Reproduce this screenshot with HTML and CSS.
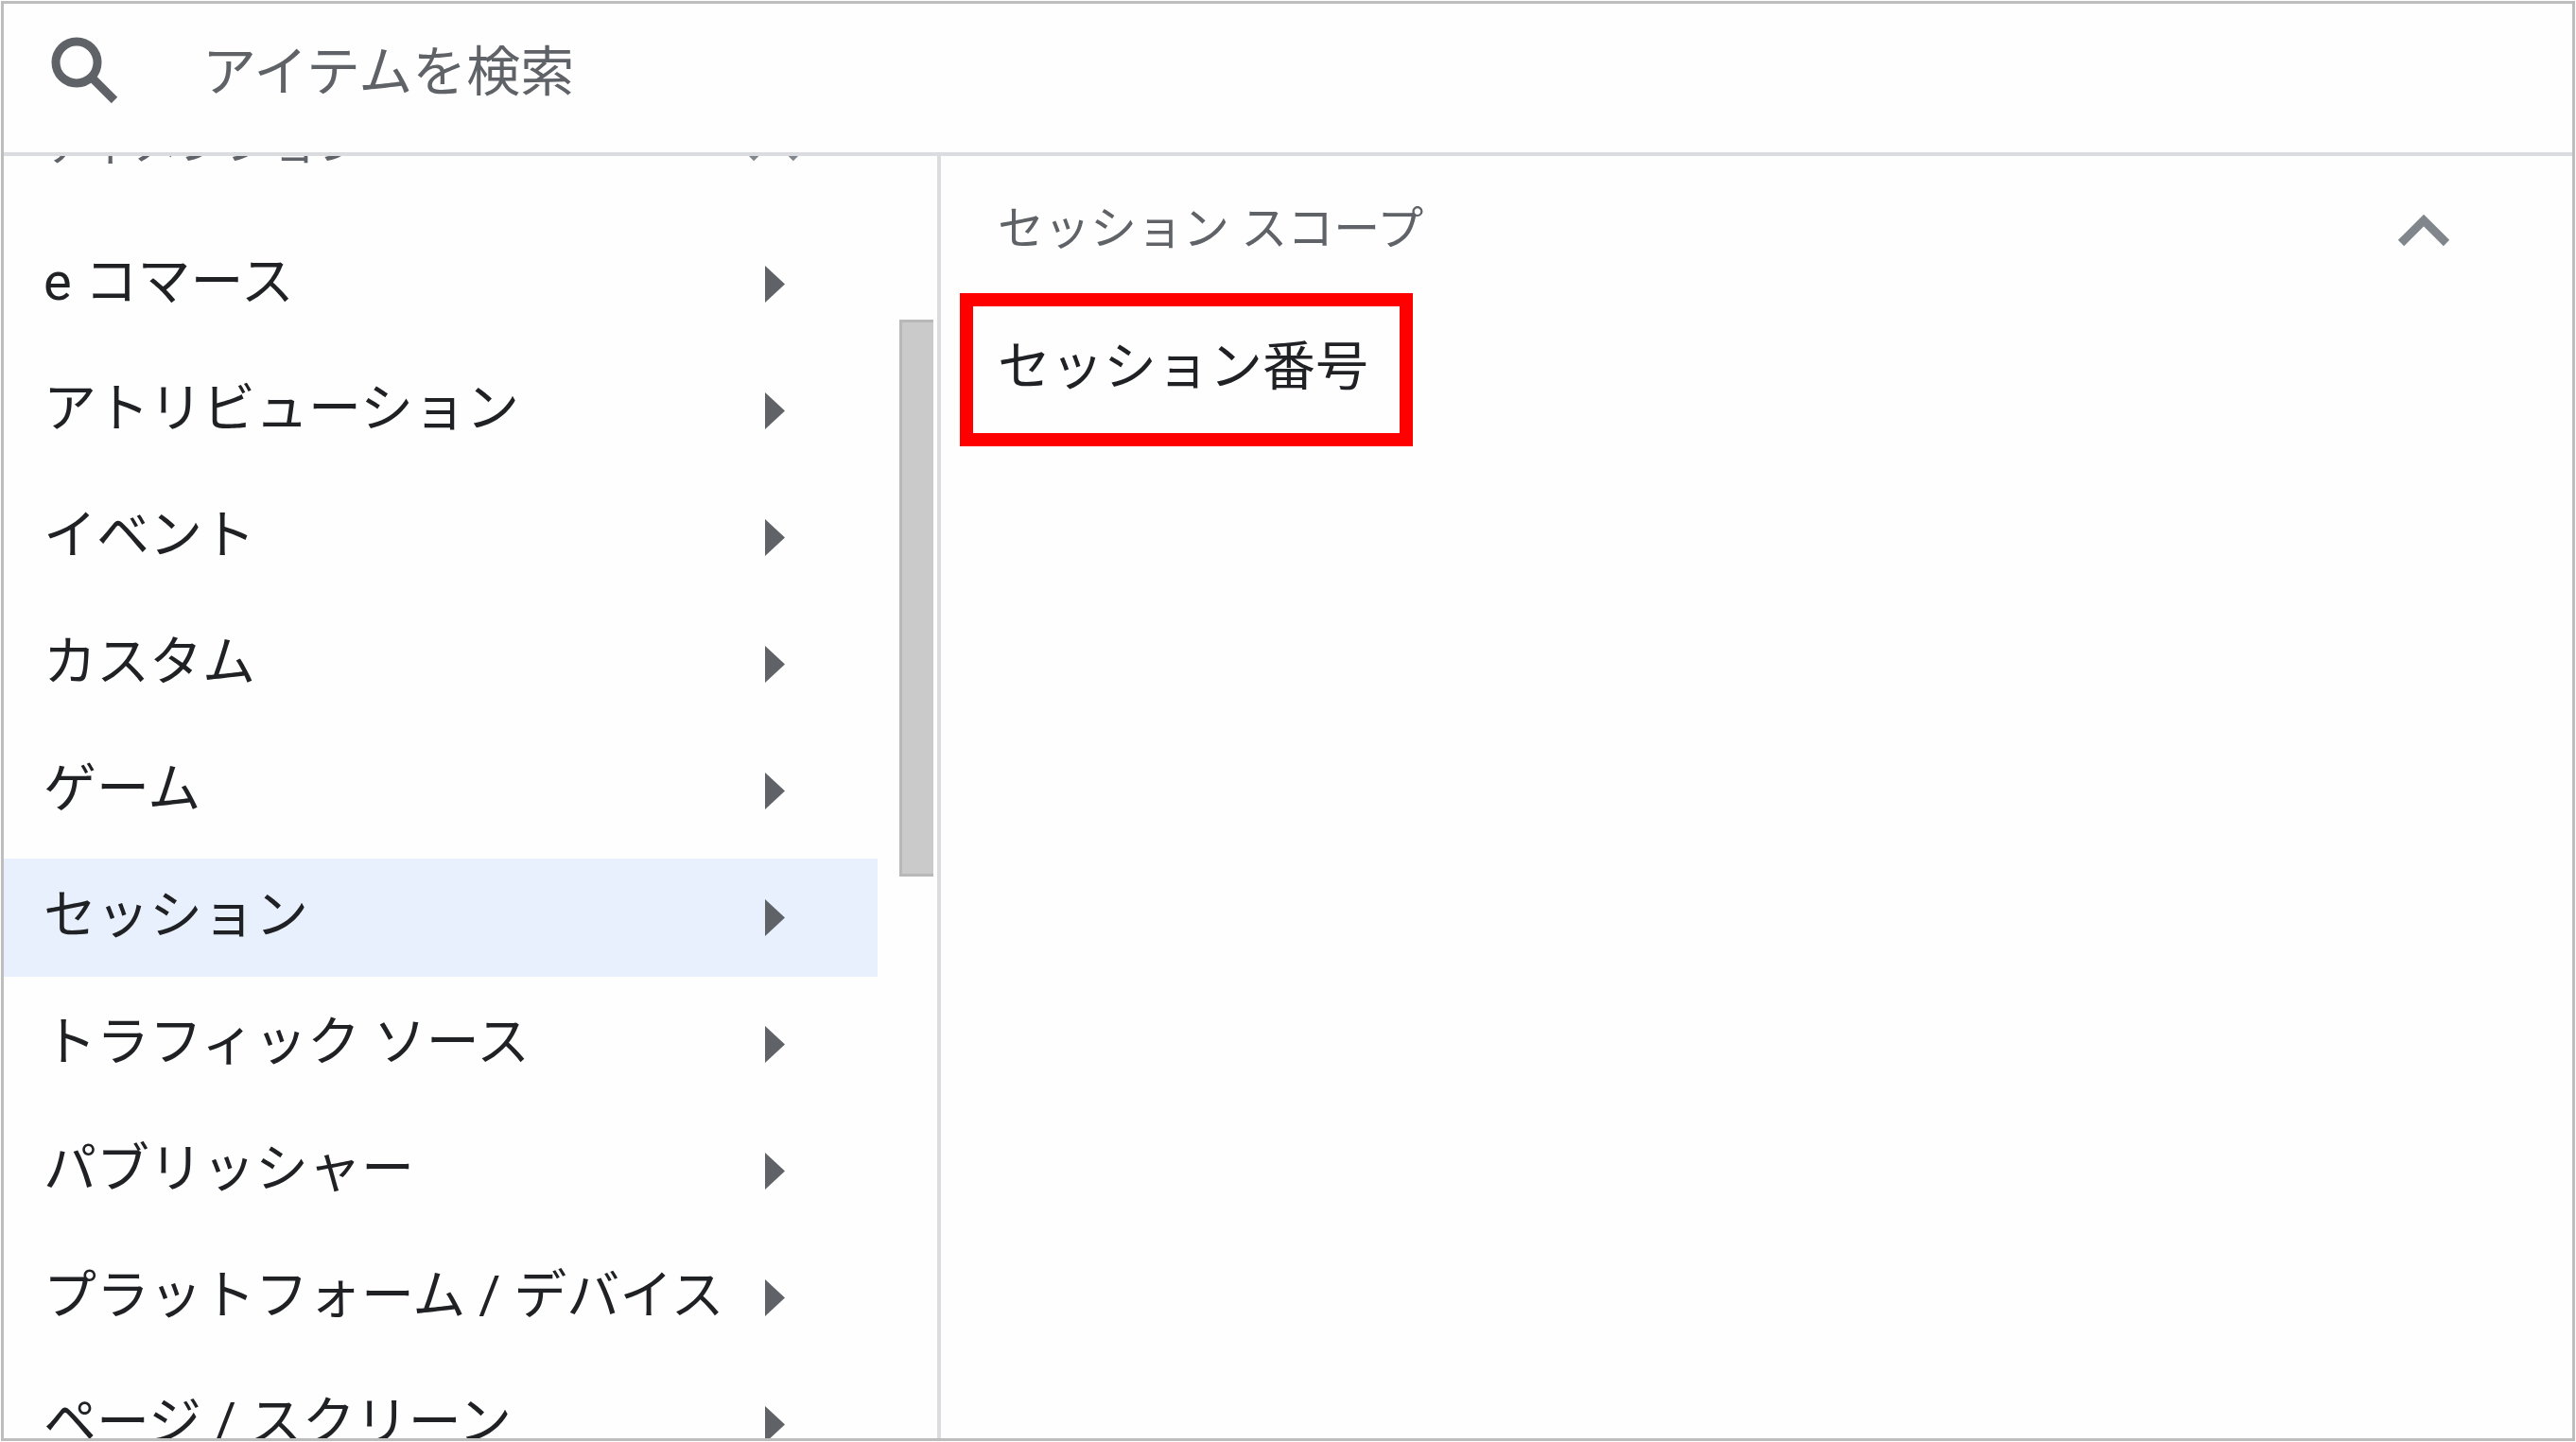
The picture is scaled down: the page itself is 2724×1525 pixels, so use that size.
FILE: index.html
```html
<!DOCTYPE html>
<html lang="ja">
<head>
  <meta charset="UTF-8" />
  <meta name="viewport" content="width=device-width, initial-scale=1.0"/>
  <title>アイテムを検索</title>
  <link rel="stylesheet" href="styles.css">
</head>
<body>
<div class="picker">
  <label class="search">
    <svg class="search-icon" viewBox="0 0 72 72" aria-hidden="true">
      <circle cx="27" cy="27" r="22"/>
      <path d="M43 43 L67 67"/>
    </svg>
    <input type="text" class="search-input" placeholder="アイテムを検索" aria-label="アイテムを検索"/>
  </label>

  <div class="panes">
    <nav class="sidebar">
      <div class="category-list">
        <button class="section">
          <span class="label">ディメンション</span>
          <svg class="chevron" viewBox="0 0 56 36" aria-hidden="true"><path d="M4 31 L28 7 L52 31"/></svg>
        </button>
        <button class="category"><span class="label">e コマース</span><span class="arrow"></span></button>
        <button class="category"><span class="label">アトリビューション</span><span class="arrow"></span></button>
        <button class="category"><span class="label">イベント</span><span class="arrow"></span></button>
        <button class="category"><span class="label">カスタム</span><span class="arrow"></span></button>
        <button class="category"><span class="label">ゲーム</span><span class="arrow"></span></button>
        <button class="category selected"><span class="label">セッション</span><span class="arrow"></span></button>
        <button class="category"><span class="label">トラフィック ソース</span><span class="arrow"></span></button>
        <button class="category"><span class="label">パブリッシャー</span><span class="arrow"></span></button>
        <button class="category"><span class="label">プラットフォーム / デバイス</span><span class="arrow"></span></button>
        <button class="category"><span class="label">ページ / スクリーン</span><span class="arrow"></span></button>
      </div>
      <div class="scrollbar"><div class="thumb"></div></div>
    </nav>

    <main class="results">
      <button class="section">
        <span class="label">セッション スコープ</span>
        <svg class="chevron" viewBox="0 0 56 36" aria-hidden="true"><path d="M4 31 L28 7 L52 31"/></svg>
      </button>
      <button class="item highlighted"><span class="label">セッション番号</span></button>
    </main>
  </div>
</div>
</body>
</html>
```
FILE: styles.css
```css
* {
  box-sizing: border-box;
}

body {
  margin: 0;
  padding: 1px;
  height: 100vh;
  background-color: #fefefe;
  color: #202124;
  font-family: Roboto, "Noto Sans CJK JP", sans-serif;
  font-size: 56px;
  line-height: 80px;
}

button, input {
  font: inherit;
  color: inherit;
  background: none;
  border: none;
  margin: 0;
  padding: 0;
  text-align: left;
  white-space: nowrap;
}

button {
  cursor: pointer;
}

.picker {
  display: flex;
  flex-direction: column;
  height: 100%;
  border: 3px solid #bdbdbd;
}

/* search bar */
.search {
  display: flex;
  flex: none;
  align-items: center;
  gap: 88px;
  height: 161px;
  padding: 0 50px 16px;
  border-bottom: 4px solid #dadce0;
}

.search-icon {
  flex: none;
  width: 72px;
  height: 72px;
  fill: none;
  stroke: #5f6368;
  stroke-width: 9;
}

.search-input {
  flex: 1;
  min-width: 0;
  height: 84px;
  padding-top: 4px;
  font-size: 57px;
  outline: none;
}

.search-input::placeholder {
  color: #5f6368;
  opacity: 1;
}

.panes {
  display: grid;
  grid-template-columns: 991px 1fr;
  flex: 1;
  min-height: 0;
}

/* left column */
.sidebar {
  display: flex;
  gap: 23px;
  overflow: hidden;
  border-right: 4px solid #dadce0;
}

.category-list {
  display: flex;
  flex: 1;
  flex-direction: column;
  gap: 9px;
  margin-top: -86px;
}

.section,
.category,
.item {
  display: flex;
  flex: none;
  align-items: center;
  justify-content: space-between;
}

.label {
  padding-bottom: 6px;
}

.section {
  width: 100%;
  height: 150px;
  padding: 0 82px 0 42px;
  font-size: 49px;
  color: #5f6368;
}

.section .label {
  padding-bottom: 2px;
}

.chevron {
  flex: none;
  width: 56px;
  height: 36px;
  fill: none;
  stroke: #80868b;
  stroke-width: 9;
}

.category {
  height: 125px;
  padding: 0 98px 0 42px;
}

.category.selected {
  background-color: #e8f0fe;
}

.arrow {
  flex: none;
  width: 21px;
  height: 39px;
  background-color: #5f6368;
  clip-path: polygon(0 0, 100% 50%, 0 100%);
}

.scrollbar {
  flex: none;
  width: 40px;
  padding-top: 173px;
}

.thumb {
  width: 36px;
  height: 589px;
  background-color: #cacaca;
  border: 3px solid #b8b8b8;
  border-right: none;
}

/* right column */
.results {
  padding-top: 4px;
}

.results .section {
  padding: 0 129px 0 60px;
}

.item {
  height: 134px;
  margin: 5px 34px;
  padding: 0 33px 0 26px;
}

.item.highlighted {
  outline: 14px solid #f00;
}
```
